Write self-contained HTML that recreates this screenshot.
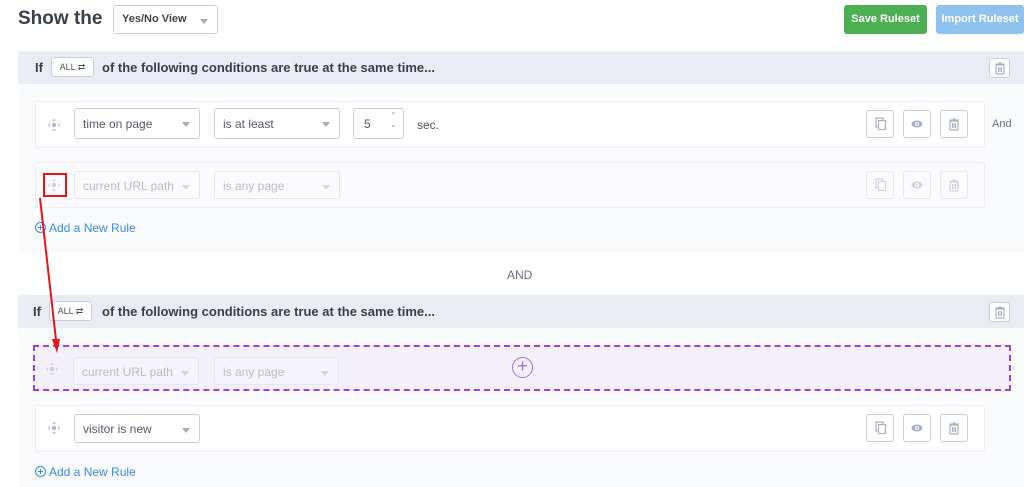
<!DOCTYPE html>
<html><head><style>
*{box-sizing:border-box;margin:0;padding:0}
body{width:1024px;height:487px;overflow:hidden;background:#fff;font-family:"Liberation Sans",sans-serif;position:relative;color:#3a3f4d}
.a{position:absolute}
.sel{position:absolute;height:31px;border:1px solid #c9cfdc;border-radius:3px;background:#fff;font-size:12px;color:#555b68;padding-left:8px;line-height:31px}
.sel:after{content:"";position:absolute;right:9px;top:13px;border-left:4px solid transparent;border-right:4px solid transparent;border-top:5px solid #a4abba}
.dis{border-color:#e3e6ed;color:#b8bcc6;background:#fbfbfd}
.dis:after{border-top-color:#d3d7df}
.btn{position:absolute;width:28px;height:28px;border:1px solid #c9cfdc;border-radius:3px;background:#fff}
.btn.d{border-color:#e6e9ef;background:transparent}
.row{position:absolute;background:#fff;border:1px solid #eceef3;border-radius:3px}
.hdr{position:absolute;left:18px;width:1006px;height:33px;background:#e9ecf3;font-weight:bold;font-size:13px}
.body{position:absolute;left:18px;width:1006px;background:#f9fafc}
.all{position:absolute;border:1px solid #c9cfdc;border-radius:3px;background:#fff;font-size:9px;font-weight:normal;color:#555;text-align:center;line-height:18px;height:20px;width:43px}
.add{position:absolute;font-size:12px;color:#3a8ee0;left:35px}
.add span{display:inline-block;width:11px;height:11px;border:1.3px solid #3a8ee0;border-radius:50%;vertical-align:-1px;margin-right:3px;position:relative}
.add span:before{content:"";position:absolute;left:1.5px;top:3.5px;width:5px;height:1.3px;background:#3a8ee0}
.add span:after{content:"";position:absolute;left:3.5px;top:1.5px;width:1.3px;height:5px;background:#3a8ee0}
</style></head><body>
<svg width="0" height="0" style="position:absolute"><defs>
<g id="mv"><circle cx="7" cy="7" r="2.2" fill="#b0b7c6"/><path d="M7 0.5l-2.5 2.5h5zM7 13.5l-2.5-2.5h5zM0.5 7l2.5-2.5v5zM13.5 7l-2.5-2.5v5z" fill="#c6ccd7"/></g>
<g id="cp"><rect x="3" y="1" width="7" height="9" fill="none" stroke="#a9b0c0" stroke-width="1.2"/><rect x="5.5" y="3.5" width="7" height="9" fill="#fff" stroke="#a9b0c0" stroke-width="1.2"/></g>
<g id="ey"><ellipse cx="7" cy="7" rx="5.5" ry="3.5" fill="#a9b0c0"/><circle cx="7" cy="7" r="2" fill="#fff"/><circle cx="7" cy="7" r="1" fill="#a9b0c0"/></g>
<g id="tr"><rect x="3" y="4" width="8" height="9" rx="1" fill="none" stroke="#a9b0c0" stroke-width="1.2"/><path d="M2 3h10M5.5 2h3M5.5 6v5M7 6v5M8.5 6v5" stroke="#a9b0c0" stroke-width="1"/></g>
</defs></svg>

<div class="a" style="left:18px;top:8px;font-size:19px;font-weight:bold;color:#3a3f4d">Show the</div>
<div class="sel" style="left:113px;top:5px;width:105px;height:29px;line-height:27px;font-weight:bold;font-size:11px;color:#444">Yes/No View</div>
<div class="a" style="left:844px;top:5px;width:83px;height:29px;background:#4cb052;border-radius:3px;color:#fff;font-size:11px;font-weight:bold;text-align:center;line-height:29px">Save Ruleset</div>
<div class="a" style="left:936px;top:5px;width:88px;height:29px;background:#90c2ef;border-radius:3px;color:#fff;font-size:11px;font-weight:bold;text-align:center;line-height:29px">Import Ruleset</div>

<!-- block 1 -->
<div class="hdr" style="top:51px"><span class="a" style="left:17px;top:9px">If</span><div class="all" style="left:33px;top:6px">ALL ⇄</div><span class="a" style="left:84px;top:9px">of the following conditions are true at the same time...</span>
<div class="btn" style="left:971px;top:7px;width:21px;height:20px"><svg width="14" height="14" style="margin:2px 0 0 3px"><use href="#tr"/></svg></div></div>
<div class="body" style="top:84px;height:168px"></div>
<div class="row" style="left:35px;top:101px;width:950px;height:47px"></div>
<svg class="a" width="14" height="14" style="left:47px;top:118px"><use href="#mv"/></svg>
<div class="sel" style="left:74px;top:108px;width:126px">time on page</div>
<div class="sel" style="left:214px;top:108px;width:126px">is at least</div>
<div class="sel" style="left:353px;top:108px;width:51px;padding-left:10px">5<span class="a" style="left:36px;top:2px;font-size:8px;color:#999;line-height:9px">⌃<br>⌄</span></div>
<style>.sel[style*="width:51px"]:after{display:none}</style>
<div class="a" style="left:417px;top:118px;font-size:12px;color:#555">sec.</div>
<div class="btn" style="left:866px;top:110px"><svg width="14" height="14" style="margin:6px"><use href="#cp"/></svg></div>
<div class="btn" style="left:903px;top:110px"><svg width="14" height="14" style="margin:6px"><use href="#ey"/></svg></div>
<div class="btn" style="left:940px;top:110px"><svg width="14" height="14" style="margin:6px"><use href="#tr"/></svg></div>
<div class="a" style="left:992px;top:118px;font-size:11px;color:#6b7180">And</div>

<div class="row" style="left:35px;top:162px;width:950px;height:46px;background:#fbfbfd"></div>
<svg class="a" width="14" height="14" style="left:47px;top:178px;opacity:.6"><use href="#mv"/></svg>
<div class="a" style="left:43px;top:173px;width:24px;height:24px;border:2px solid #e8141a"></div>
<div class="sel dis" style="left:74px;top:171px;width:126px;height:28px;line-height:28px">current URL path</div>
<div class="sel dis" style="left:214px;top:171px;width:126px;height:28px;line-height:28px">is any page</div>
<div class="btn d" style="left:866px;top:171px"><svg width="14" height="14" style="margin:6px;opacity:.5"><use href="#cp"/></svg></div>
<div class="btn d" style="left:903px;top:171px"><svg width="14" height="14" style="margin:6px;opacity:.5"><use href="#ey"/></svg></div>
<div class="btn d" style="left:940px;top:171px"><svg width="14" height="14" style="margin:6px;opacity:.5"><use href="#tr"/></svg></div>
<div class="add" style="top:221px"><span></span>Add a New Rule</div>

<div class="a" style="left:507px;top:268px;font-size:12px;color:#6b7180">AND</div>

<!-- block 2 -->
<div class="hdr" style="top:295px"><span class="a" style="left:15px;top:9px">If</span><div class="all" style="left:31px;top:6px">ALL ⇄</div><span class="a" style="left:84px;top:9px">of the following conditions are true at the same time...</span>
<div class="btn" style="left:971px;top:7px;width:21px;height:20px"><svg width="14" height="14" style="margin:2px 0 0 3px"><use href="#tr"/></svg></div></div>
<div class="body" style="top:328px;height:159px"></div>
<div class="a" style="left:33px;top:345px;width:978px;height:46px;border:2px dashed #9445e0;background:#f3f0fa"></div>
<svg class="a" width="14" height="14" style="left:45px;top:362px;opacity:.6"><use href="#mv"/></svg>
<div class="sel dis" style="left:73px;top:357px;width:126px;height:28px;line-height:28px;background:#f6f4fb">current URL path</div>
<div class="sel dis" style="left:214px;top:357px;width:125px;height:28px;line-height:28px;background:#f6f4fb">is any page</div>
<div class="a" style="left:512px;top:357px;width:21px;height:21px;border:1.5px solid #a66ce3;border-radius:50%;color:#a66ce3;font-size:18px;line-height:17px;text-align:center">+</div>
<div class="row" style="left:35px;top:405px;width:950px;height:47px"></div>
<svg class="a" width="14" height="14" style="left:47px;top:421px"><use href="#mv"/></svg>
<div class="sel" style="left:74px;top:414px;width:126px;height:29px;line-height:29px">visitor is new</div>
<div class="btn" style="left:866px;top:414px"><svg width="14" height="14" style="margin:6px"><use href="#cp"/></svg></div>
<div class="btn" style="left:903px;top:414px"><svg width="14" height="14" style="margin:6px"><use href="#ey"/></svg></div>
<div class="btn" style="left:940px;top:414px"><svg width="14" height="14" style="margin:6px"><use href="#tr"/></svg></div>
<div class="add" style="top:465px"><span></span>Add a New Rule</div>

<svg class="a" width="1024" height="487" style="left:0;top:0"><line x1="40" y1="198" x2="56" y2="340" stroke="#e8141a" stroke-width="2"/><path d="M52 339l5 14 3-14z" fill="#e8141a"/></svg>
</body></html>
